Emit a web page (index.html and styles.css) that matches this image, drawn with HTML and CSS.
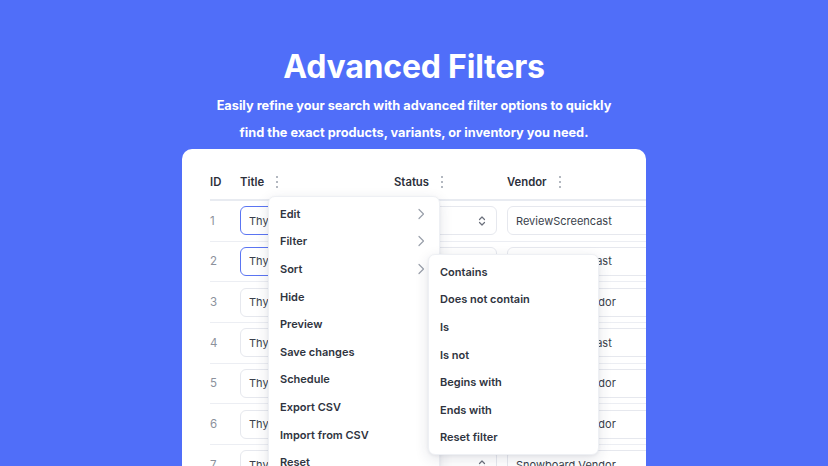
FILE: index.html
```html
<!DOCTYPE html>
<html lang="en">
<head>
<meta charset="utf-8">
<title>Advanced Filters</title>
<link rel="stylesheet" href="styles.css">
</head>
<body>
<header class="hero">
  <h1 class="hero-title">Advanced Filters</h1>
  <p class="hero-sub">Easily refine your search with advanced filter options to quickly<br>find the exact products, variants, or inventory you need.</p>
</header>

<main class="panel">
  <div class="table">
    <div class="row head">
      <div class="cell id">ID</div>
      <div class="cell title"><span>Title</span><span class="kebab"><i></i><i></i><i></i></span></div>
      <div class="cell status"><span>Status</span><span class="kebab"><i></i><i></i><i></i></span></div>
      <div class="cell vendor"><span>Vendor</span><span class="kebab"><i></i><i></i><i></i></span></div>
    </div>

    <div class="row">
      <div class="cell id num">1</div>
      <div class="cell title"><div class="box focus">Thyme Snowboard</div></div>
      <div class="cell status"><div class="box select">Active<svg class="updown" viewBox="0 0 8 12"><path d="M1.5 4.5 4 2l2.5 2.5M1.5 7.5 4 10l2.5-2.5"/></svg></div></div>
      <div class="cell vendor"><div class="box">ReviewScreencast</div></div>
    </div>
    <div class="row">
      <div class="cell id num">2</div>
      <div class="cell title"><div class="box focus">Thyme Snowboard</div></div>
      <div class="cell status"><div class="box select">Active<svg class="updown" viewBox="0 0 8 12"><path d="M1.5 4.5 4 2l2.5 2.5M1.5 7.5 4 10l2.5-2.5"/></svg></div></div>
      <div class="cell vendor"><div class="box">ReviewScreencast</div></div>
    </div>
    <div class="row">
      <div class="cell id num">3</div>
      <div class="cell title"><div class="box">Thyme Snowboard</div></div>
      <div class="cell status"><div class="box select">Active<svg class="updown" viewBox="0 0 8 12"><path d="M1.5 4.5 4 2l2.5 2.5M1.5 7.5 4 10l2.5-2.5"/></svg></div></div>
      <div class="cell vendor"><div class="box">Snowboard Vendor</div></div>
    </div>
    <div class="row">
      <div class="cell id num">4</div>
      <div class="cell title"><div class="box">Thyme Snowboard</div></div>
      <div class="cell status"><div class="box select">Active<svg class="updown" viewBox="0 0 8 12"><path d="M1.5 4.5 4 2l2.5 2.5M1.5 7.5 4 10l2.5-2.5"/></svg></div></div>
      <div class="cell vendor"><div class="box">ReviewScreencast</div></div>
    </div>
    <div class="row">
      <div class="cell id num">5</div>
      <div class="cell title"><div class="box">Thyme Snowboard</div></div>
      <div class="cell status"><div class="box select">Active<svg class="updown" viewBox="0 0 8 12"><path d="M1.5 4.5 4 2l2.5 2.5M1.5 7.5 4 10l2.5-2.5"/></svg></div></div>
      <div class="cell vendor"><div class="box">Snowboard Vendor</div></div>
    </div>
    <div class="row">
      <div class="cell id num">6</div>
      <div class="cell title"><div class="box">Thyme Snowboard</div></div>
      <div class="cell status"><div class="box select">Active<svg class="updown" viewBox="0 0 8 12"><path d="M1.5 4.5 4 2l2.5 2.5M1.5 7.5 4 10l2.5-2.5"/></svg></div></div>
      <div class="cell vendor"><div class="box">Snowboard Vendor</div></div>
    </div>
    <div class="row">
      <div class="cell id num">7</div>
      <div class="cell title"><div class="box">Thyme Snowboard</div></div>
      <div class="cell status"><div class="box select">Active<svg class="updown" viewBox="0 0 8 12"><path d="M1.5 4.5 4 2l2.5 2.5M1.5 7.5 4 10l2.5-2.5"/></svg></div></div>
      <div class="cell vendor"><div class="box">Snowboard Vendor</div></div>
    </div>
  </div>

  <ul class="menu main-menu">
    <li>Edit<svg class="chev" viewBox="0 0 8 12"><path d="M2 1.5 6.5 6 2 10.5"/></svg></li>
    <li>Filter<svg class="chev" viewBox="0 0 8 12"><path d="M2 1.5 6.5 6 2 10.5"/></svg></li>
    <li>Sort<svg class="chev" viewBox="0 0 8 12"><path d="M2 1.5 6.5 6 2 10.5"/></svg></li>
    <li>Hide</li>
    <li>Preview</li>
    <li>Save changes</li>
    <li>Schedule</li>
    <li>Export CSV</li>
    <li>Import from CSV</li>
    <li>Reset</li>
  </ul>

  <ul class="menu sub-menu">
    <li>Contains</li>
    <li>Does not contain</li>
    <li>Is</li>
    <li>Is not</li>
    <li>Begins with</li>
    <li>Ends with</li>
    <li>Reset filter</li>
  </ul>
</main>
</body>
</html>
```

FILE: styles.css
```css
* { box-sizing: border-box; }

html, body {
  margin: 0;
  height: 100%;
  overflow: hidden;
}

body {
  background: #506ef9;
  font-family: "Inter", "Noto Sans", sans-serif;
  color: #2c303b;
}

.hero {
  text-align: center;
  color: #ffffff;
  padding-top: 47px;
}

.hero-title {
  margin: 0;
  font-size: 32px;
  line-height: 40px;
  font-weight: 700;
  letter-spacing: -0.2px;
}

.hero-sub {
  margin: 5px 0 0;
  font-size: 12.75px;
  line-height: 27px;
  font-weight: 700;
}

.panel {
  position: relative;
  width: 464px;
  margin: 3px 0 0 182px;
  height: 420px;
  background: #ffffff;
  border-radius: 10px;
  overflow: hidden;
  padding: 20px 0 0 28px;
}

.table {
  width: 480px;
}

.row {
  display: grid;
  grid-template-columns: 30px 147px 120px 1fr;
  height: 40.67px;
  align-items: center;
  border-bottom: 1px solid #eceef3;
}

.row.head {
  height: 32px;
  border-bottom: 2px solid #e8ebf1;
  align-items: start;
  padding-top: 6px;
  font-size: 11.3px;
  font-weight: 600;
  color: #2c303b;
}

.cell {
  display: flex;
  align-items: center;
  min-width: 0;
}

.head .status { padding-left: 7px; }

.kebab {
  display: inline-flex;
  flex-direction: column;
  gap: 3px;
  margin-left: 12px;
}
.kebab i {
  display: block;
  width: 2px;
  height: 2px;
  border-radius: 50%;
  background: #9aa0ab;
}

.num {
  font-size: 11.5px;
  color: #8c919c;
}

.box {
  height: 29px;
  width: 100%;
  border: 1px solid #e6e8ee;
  border-radius: 6px;
  padding: 0 8px;
  display: flex;
  align-items: center;
  font-size: 11px;
  color: #3a3f4b;
  white-space: nowrap;
  overflow: hidden;
}

.title .box { width: 140px; }

.box.focus {
  border: 1.5px solid #5b75f2;
}

.status .box { width: 110px; justify-content: space-between; }

.updown {
  width: 8px;
  height: 12px;
  margin-right: 2px;
  fill: none;
  stroke: #6b707c;
  stroke-width: 1.2;
  stroke-linecap: round;
  stroke-linejoin: round;
}

.vendor .box { width: 170px; }

.menu {
  position: absolute;
  margin: 0;
  list-style: none;
  background: #ffffff;
  border: 1px solid #eef0f4;
  border-radius: 7px;
  box-shadow: 0 4px 14px rgba(30, 40, 70, 0.12), 0 1px 3px rgba(30, 40, 70, 0.06);
  padding: 3px 0;
}

.menu li {
  height: 27.6px;
  display: flex;
  align-items: center;
  justify-content: space-between;
  padding: 0 14px 0 11px;
  font-size: 11px;
  font-weight: 600;
  color: #2f3440;
  white-space: nowrap;
}

.main-menu {
  left: 86px;
  top: 47px;
  width: 172px;
}

.sub-menu {
  left: 246px;
  top: 105px;
  width: 171px;
}

.chev {
  width: 8px;
  height: 12px;
  fill: none;
  stroke: #9aa0ab;
  stroke-width: 1.2;
  stroke-linecap: round;
  stroke-linejoin: round;
}
```
